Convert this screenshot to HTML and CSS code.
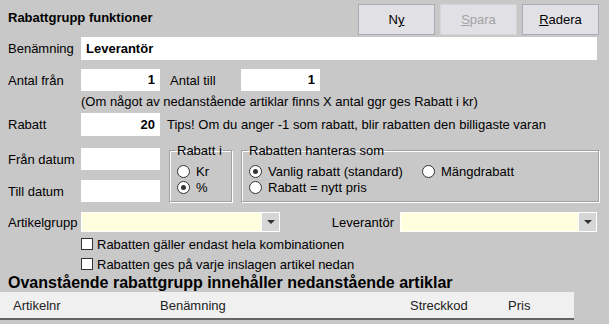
FILE: index.html
```html
<!DOCTYPE html>
<html lang="sv">
<head>
    <meta charset="UTF-8">
    <title>Rabattgrupp funktioner</title>
    <link rel="stylesheet" href="styles.css">
</head>
<body>
    <div class="panel">

        <!-- Title and toolbar -->
        <div class="head">
            <div class="title">Rabattgrupp funktioner</div>
            <div class="toolbar">
                <button class="btn">N<u>y</u></button>
                <button class="btn disabled"><u>S</u>para</button>
                <button class="btn"><u>R</u>adera</button>
            </div>
        </div>

        <div class="row row-name">
            <label class="lbl">Benämning</label>
            <div class="field wide bold">Leverantör</div>
        </div>

        <div class="row row-qty">
            <label class="lbl">Antal från</label>
            <div class="field short num">1</div>
            <label class="lbl-mid">Antal till</label>
            <div class="field short num">1</div>
        </div>
        <p class="note">(Om något av nedanstående artiklar finns X antal ggr ges Rabatt i kr)</p>

        <div class="row row-discount">
            <label class="lbl">Rabatt</label>
            <div class="field short num">20</div>
            <span class="tip">Tips! Om du anger -1 som rabatt, blir rabatten den billigaste varan</span>
        </div>

        <div class="middle">
            <div class="dates">
                <div class="row">
                    <label class="lbl">Från datum</label>
                    <div class="field short"></div>
                </div>
                <div class="row date-second">
                    <label class="lbl">Till datum</label>
                    <div class="field short"></div>
                </div>
            </div>

            <fieldset class="group group-unit">
                <legend>Rabatt i</legend>
                <div class="opt"><span class="radio"></span>Kr</div>
                <div class="opt"><span class="radio on"></span>%</div>
            </fieldset>

            <fieldset class="group group-mode">
                <legend>Rabatten hanteras som</legend>
                <div class="opt-line">
                    <div class="opt opt-left"><span class="radio on"></span>Vanlig rabatt (standard)</div>
                    <div class="opt"><span class="radio"></span>Mängdrabatt</div>
                </div>
                <div class="opt"><span class="radio"></span>Rabatt = nytt pris</div>
            </fieldset>
        </div>

        <div class="row row-select">
            <label class="lbl">Artikelgrupp</label>
            <div class="combo combo-group"><span class="combo-arrow"></span></div>
            <label class="lbl-right">Leverantör</label>
            <div class="combo combo-supplier"><span class="combo-arrow"></span></div>
        </div>

        <div class="checks">
            <div class="check"><span class="box"></span>Rabatten gäller endast hela kombinationen</div>
            <div class="check"><span class="box"></span>Rabatten ges på varje inslagen artikel nedan</div>
        </div>

        <h2 class="section">Ovanstående rabattgrupp innehåller nedanstående artiklar</h2>
    </div>

    <!-- Article list header -->
    <div class="grid-head">
        <span class="col col-nr">Artikelnr</span>
        <span class="col col-name">Benämning</span>
        <span class="col col-code">Streckkod</span>
        <span class="col col-price">Pris</span>
    </div>
</body>
</html>
```

FILE: styles.css
```css
/* General */
html, body {
    margin: 0;
    padding: 0;
}

body {
    font-family: "Liberation Sans", Arial, sans-serif;
    font-size: 13px;
    color: #000;
    background-color: #c8c8c8;
    width: 609px;
    height: 324px;
    overflow: hidden;
}

.panel {
    padding: 0 10px 0 8px;
}

/* Header */
.head {
    display: flex;
    justify-content: space-between;
    height: 37px;
}

.title {
    font-weight: bold;
    line-height: 15px;
    padding-top: 10px;
}

.toolbar {
    display: flex;
    gap: 5px;
    padding-top: 4px;
}

.btn {
    width: 77px;
    height: 31px;
    font-family: inherit;
    font-size: 13px;
    color: #000;
    background-color: #e1e1e5;
    border: 1px solid #ababb4;
    border-radius: 0;
    padding: 0;
}

.btn.disabled {
    color: #a3a3a3;
    border-color: #d4d4d8;
}

/* Rows */
.row {
    display: flex;
    align-items: center;
}

.lbl {
    width: 73px;
    flex: none;
}

.lbl-mid {
    width: 71px;
    margin-left: 10px;
}

.field {
    background-color: #fff;
    height: 22px;
    line-height: 22px;
    box-sizing: border-box;
    padding: 0 5px;
}

.field.wide {
    width: 516px;
    height: 23px;
    line-height: 24px;
}

.field.short {
    width: 79px;
}

.bold, .num {
    font-weight: bold;
}

.num {
    text-align: right;
}

.row-qty {
    margin-top: 9px;
}

.note {
    margin: 0 0 0 73px;
    padding-top: 3px;
    line-height: 16px;
}

.row-discount {
    margin-top: 3px;
}

.row-discount .field {
    height: 23px;
    line-height: 24px;
}

.tip {
    margin-left: 7px;
}

/* Dates and option groups */
.middle {
    display: flex;
    align-items: flex-start;
    margin-top: 7px;
}

.dates {
    width: 161px;
    padding-top: 5px;
}

.date-second {
    margin-top: 10px;
}

.group {
    margin: 0;
    border: 1px solid #a0a0a0;
    box-shadow: inset 1px 1px 0 #fff, 1px 1px 0 #fff;
    padding: 5px 0 5px 7px;
    height: 59px;
    box-sizing: border-box;
}

.group legend {
    padding: 0 1px;
    margin-left: -1px;
    line-height: 15px;
}

.group-unit {
    width: 63px;
}

.group-mode {
    width: 358px;
    margin-left: 9px;
}

.opt {
    display: flex;
    align-items: center;
    height: 16px;
    white-space: nowrap;
}

.opt-line {
    display: flex;
}

.opt-left {
    width: 173px;
}

.radio {
    width: 11px;
    height: 11px;
    border: 1px solid #333;
    border-radius: 50%;
    background-color: #fff;
    margin-right: 6px;
    position: relative;
    flex: none;
}

.radio.on::after {
    content: "";
    position: absolute;
    left: 3px;
    top: 3px;
    width: 5px;
    height: 5px;
    border-radius: 50%;
    background-color: #333;
}

/* Combo boxes */
.row-select {
    margin-top: 10px;
}

.combo {
    height: 20px;
    box-sizing: border-box;
    background-color: #ffffe0;
    border: 1px solid #fff;
    display: flex;
    justify-content: flex-end;
}

.combo-group {
    width: 199px;
}

.combo-supplier {
    width: 197px;
}

.combo-arrow {
    width: 17px;
    background-color: #d6d6d6;
    border-left: 1px solid #fff;
    position: relative;
}

.combo-arrow::after {
    content: "";
    position: absolute;
    left: 5px;
    top: 7px;
    border-left: 4px solid transparent;
    border-right: 4px solid transparent;
    border-top: 4px solid #333;
}

.lbl-right {
    width: 114px;
    text-align: right;
    margin-right: 6px;
}

/* Checkboxes */
.checks {
    margin: 2px 0 0 73px;
}

.check {
    display: flex;
    align-items: center;
    height: 20px;
}

.box {
    width: 10px;
    height: 10px;
    border: 1px solid #333;
    background-color: #fff;
    margin-right: 4px;
}

.section {
    margin: 0;
    font-size: 16px;
    line-height: 17px;
    font-weight: bold;
}

/* List header */
.grid-head {
    position: relative;
    width: 574px;
    height: 26px;
    margin-top: 1px;
    background-color: #f0f0f0;
    border-bottom: 2px solid #646464;
    color: #222;
}

.col {
    position: absolute;
    top: 6px;
}

.col-nr { left: 13px; }
.col-name { left: 160px; }
.col-code { left: 410px; }
.col-price { left: 508px; }
```
